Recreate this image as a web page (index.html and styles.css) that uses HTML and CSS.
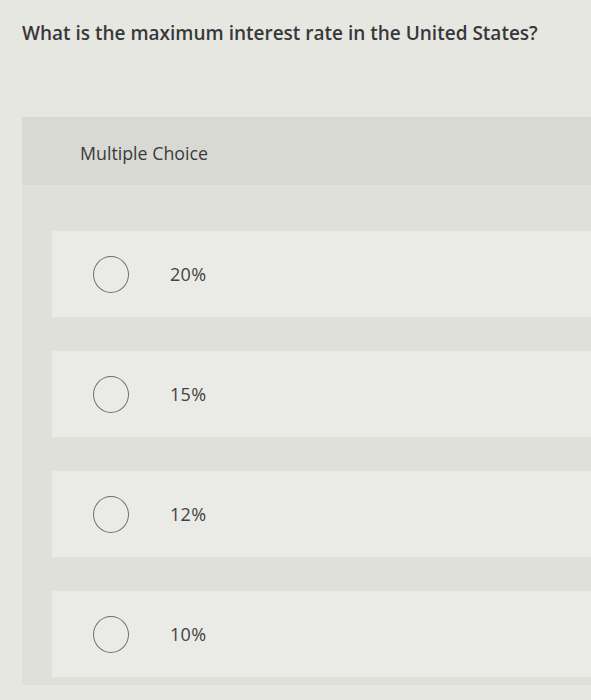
FILE: index.html
```html
<!DOCTYPE html>
<html>
<head>
<meta charset="utf-8">
<link rel="stylesheet" href="styles.css">
</head>
<body>
<h1 class="question">What is the maximum interest rate in the United States?</h1>
<div class="card">
  <div class="card-header">Multiple Choice</div>
  <div class="options">
    <div class="option"><span class="radio"></span><span class="label">20%</span></div>
    <div class="option"><span class="radio"></span><span class="label">15%</span></div>
    <div class="option"><span class="radio"></span><span class="label">12%</span></div>
    <div class="option"><span class="radio"></span><span class="label">10%</span></div>
  </div>
</div>
</body>
</html>
```
FILE: styles.css
```css
html, body {
  margin: 0;
  padding: 0;
}
body {
  background: #e7e7e2;
  font-family: "Open Sans", Lato, sans-serif;
  width: 591px;
  height: 700px;
  overflow: hidden;
}
.question {
  margin: 20px 0 0 22px;
  font-size: 19px;
  line-height: 26px;
  font-weight: 600;
  color: #38383a;
  letter-spacing: 0;
}
.card {
  margin: 71px 0 0 22px;
  background: #e0e0db;
  padding-bottom: 8px;
}
.card-header {
  height: 68px;
  box-sizing: border-box;
  padding: 24px 0 0 58px;
  background: #d9d9d3;
  font-size: 17.8px;
  line-height: 24px;
  color: #3a3a3c;
}
.options {
  display: flex;
  flex-direction: column;
  gap: 34px;
  padding: 46px 0 0 30px;
}
.option {
  height: 86px;
  display: flex;
  align-items: center;
  padding-left: 41px;
  background: #eaeae6;
}
.radio {
  width: 36px;
  height: 37px;
  border: 1.6px solid #6e6e76;
  border-radius: 50%;
  box-sizing: border-box;
  flex: none;
}
.label {
  margin-left: 41px;
  font-size: 18px;
  letter-spacing: 0.3px;
  color: #434345;
}
```
